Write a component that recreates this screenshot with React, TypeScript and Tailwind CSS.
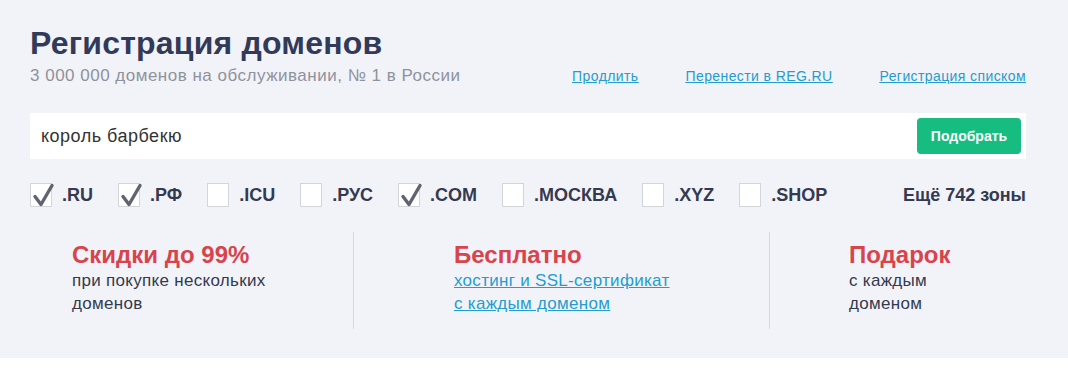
import React from "react";

const zones: { name: string; checked: boolean }[] = [
  { name: ".RU", checked: true },
  { name: ".РФ", checked: true },
  { name: ".ICU", checked: false },
  { name: ".РУС", checked: false },
  { name: ".COM", checked: true },
  { name: ".МОСКВА", checked: false },
  { name: ".XYZ", checked: false },
  { name: ".SHOP", checked: false },
];

function Box({ checked }: { checked: boolean }) {
  return (
    <span className="relative w-[22px] h-[24px] bg-white border border-[#d3d5dc] shrink-0">
      {checked && (
        <svg viewBox="0 0 22 24" className="absolute left-[-1px] top-[-1px] w-[22px] h-[24px] overflow-visible">
          <path d="M5 13.5 L11 21.5 L22 2.5" fill="none" stroke="#5f6470" strokeWidth="3.4" strokeLinecap="round" strokeLinejoin="round" />
        </svg>
      )}
    </span>
  );
}

export default function App() {
  return (
    <div className="w-[1068px] h-[389px] bg-white" style={{ fontFamily: '"Liberation Sans", Arial, sans-serif' }}>
      <div className="h-[358px] bg-[#f2f3f8] pl-[30px] pr-[42px] pt-[24px]">
        <h1 className="text-[32px] leading-[38px] font-bold text-[#313a58] tracking-[0.2px]">Регистрация доменов</h1>
        <div className="flex items-baseline mt-[3px] h-[22px]">
          <span className="text-[17px] leading-[22px] tracking-[0.5px] text-[#8e929d]">3 000 000 доменов на обслуживании, № 1 в России</span>
          <div className="ml-auto flex gap-[47px] text-[14px] tracking-[0.4px] text-[#249cd0] underline">
            <a>Продлить</a>
            <a>Перенести в REG.RU</a>
            <a>Регистрация списком</a>
          </div>
        </div>
        <div className="mt-[26px] h-[46px] bg-white flex items-center pl-[11px] pr-[5px]">
          <span className="text-[18px] tracking-[0.5px] text-[#333]">король барбекю</span>
          <button className="ml-auto w-[104px] h-[36px] rounded-[4px] bg-[#17bd80] text-white text-[14px] font-bold">Подобрать</button>
        </div>
        <div className="mt-[23px] flex items-center h-[26px]">
          {zones.map((z) => (
            <label key={z.name} className="flex items-center mr-[25px]">
              <Box checked={z.checked} />
              <span className="ml-[10px] text-[18px] font-bold text-[#343a50]">{z.name}</span>
            </label>
          ))}
          <span className="ml-auto text-[18px] font-bold text-[#343a50]">Ещё 742 зоны</span>
        </div>
        <div className="mt-[24px] flex h-[97px]">
          <div className="w-[323px] pl-[42px] pt-[9px]">
            <div className="text-[24px] leading-[28px] font-bold text-[#d8434c]">Скидки до 99%</div>
            <div className="text-[17px] leading-[23px] tracking-[0.3px] text-[#333a4d]">при покупке нескольких<br />доменов</div>
          </div>
          <div className="w-[416px] border-l border-[#d6d8e2] pl-[100px] pt-[9px]">
            <div className="text-[24px] leading-[28px] font-bold text-[#d8434c]">Бесплатно</div>
            <div className="text-[17px] leading-[23px] tracking-[0.3px] text-[#249cd0] underline">хостинг и SSL-сертификат<br />с каждым доменом</div>
          </div>
          <div className="border-l border-[#d6d8e2] pl-[79px] pt-[9px]">
            <div className="text-[24px] leading-[28px] font-bold text-[#d8434c]">Подарок</div>
            <div className="text-[17px] leading-[23px] tracking-[0.3px] text-[#333a4d]">с каждым<br />доменом</div>
          </div>
        </div>
      </div>
    </div>
  );
}
